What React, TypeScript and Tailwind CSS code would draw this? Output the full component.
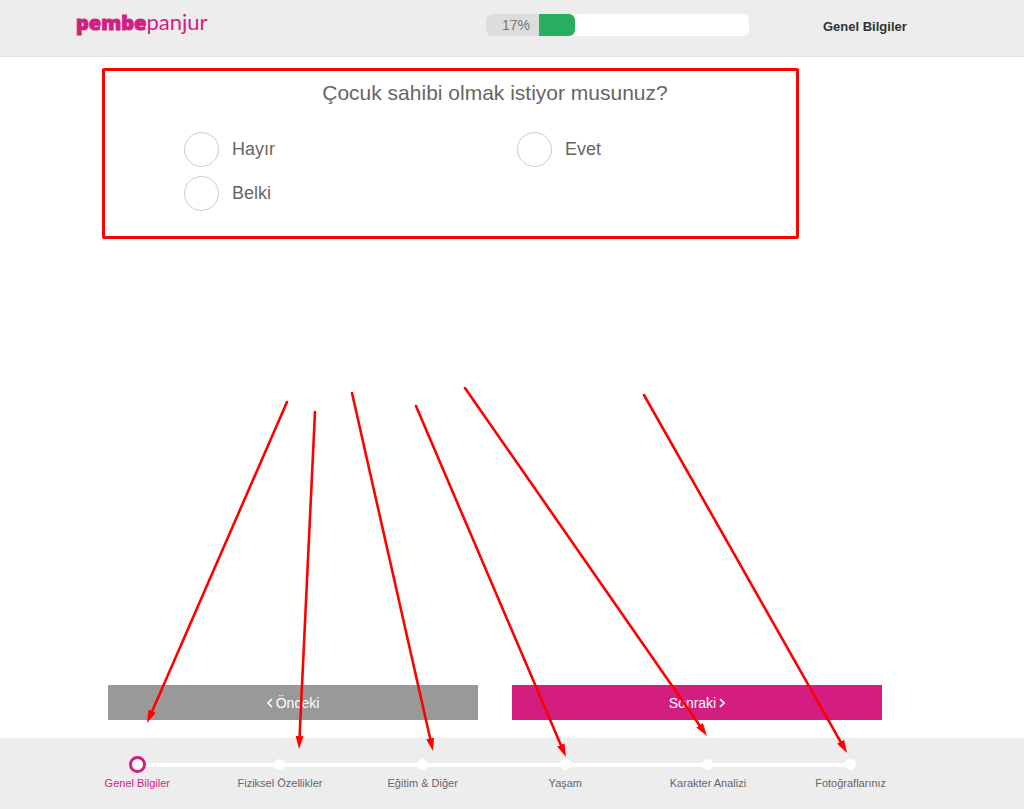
import { useState } from "react";

const options = ["Hayır", "Evet", "Belki"];

const steps = [
  "Genel Bilgiler",
  "Fiziksel Özellikler",
  "Eğitim & Diğer",
  "Yaşam",
  "Karakter Analizi",
  "Fotoğraflarınız",
];

const arrows = [
  [287, 402, 147, 723],
  [315, 412, 299, 749],
  [352, 393, 433, 751],
  [416, 406, 566, 757],
  [465, 388, 707, 736],
  [644, 395, 847, 753],
];

function Logo() {
  return (
    <a
      href="#"
      aria-label="pembepanjur"
      className="flex items-baseline text-[22px] leading-6 text-[#d31d81]"
    >
      <span className="text-xl leading-6 font-extrabold [-webkit-text-stroke:1px_#d31d81] [font-family:'Open_Sans',sans-serif]">
        pembe
      </span>
      <span className="[font-family:Lato,sans-serif]">panjur</span>
    </a>
  );
}

function Header() {
  return (
    <header className="flex h-[57px] items-start border-b border-[#e2e2e2] bg-[#ededed] pl-[76px]">
      <div className="w-[410px] shrink-0 pt-[10px]">
        <Logo />
      </div>
      <div
        role="progressbar"
        aria-valuenow={17}
        aria-valuemin={0}
        aria-valuemax={100}
        aria-label="İlerleme"
        className="mt-[14px] flex h-[22px] w-[263px] shrink-0 overflow-hidden rounded-md bg-white"
      >
        <span className="w-[53px] bg-[#ddd] pl-4 text-sm leading-[22px] text-[#777]">17%</span>
        <span className="w-9 rounded-r-md bg-[#27ae60]" />
      </div>
      <h2 className="ml-[74px] mt-[17px] whitespace-nowrap text-[13px] font-bold leading-5 text-[#333]">
        Genel Bilgiler
      </h2>
    </header>
  );
}

function Question() {
  const [answer, setAnswer] = useState("");
  return (
    <section className="relative pl-[108px] pr-[142px] pt-[21px]">
      <div
        aria-hidden="true"
        className="pointer-events-none absolute left-[102px] right-[225px] top-[11px] h-[171px] rounded-xs border-3 border-[#f00]"
      />
      <h1 id="question" className="text-center text-[21px] leading-[30px] text-[#666]">
        Çocuk sahibi olmak istiyor musunuz?
      </h1>
      <div
        role="radiogroup"
        aria-labelledby="question"
        className="mt-6 grid grid-cols-2 gap-y-[9px] pl-[76px] pr-8"
      >
        {options.map((option) => (
          <label key={option} className="flex items-center gap-[13px] text-lg text-[#666]">
            <input
              type="radio"
              name="children"
              value={option}
              checked={answer === option}
              onChange={() => setAnswer(option)}
              className="size-[35px] appearance-none rounded-full border border-[#ccc] bg-white checked:border-8 checked:border-[#d31d81]"
            />
            <span className="leading-[35px]">{option}</span>
          </label>
        ))}
      </div>
    </section>
  );
}

function Chevron({ d }: { d: string }) {
  return (
    <svg width="6" height="10" viewBox="0 0 6 10" fill="none" stroke="currentColor" strokeWidth="1.6" aria-hidden="true">
      <path d={d} />
    </svg>
  );
}

function Footer() {
  return (
    <footer className="h-[71px] bg-[#ededed] pl-[66px] pr-[102px] pt-[18px]">
      <ol className="grid grid-cols-6">
        {steps.map((step, index) => (
          <li
            key={step}
            className="relative flex flex-col items-center before:absolute before:left-1/2 before:top-[7px] before:h-1 before:w-full before:bg-white last:before:hidden"
          >
            <span className="relative flex h-[17px] items-center">
              <span
                className={
                  index === 0
                    ? "size-[17px] rounded-full border-3 border-[#d31d81] bg-white"
                    : "size-[11px] rounded-full bg-white"
                }
              />
            </span>
            <a
              href="#"
              aria-current={index === 0 ? "step" : undefined}
              className={
                index === 0
                  ? "mt-[2px] whitespace-nowrap text-[11px] leading-4 text-[#d31d81]"
                  : "mt-[2px] whitespace-nowrap text-[11px] leading-4 text-[#666]"
              }
            >
              {step}
            </a>
          </li>
        ))}
      </ol>
    </footer>
  );
}

function Arrows() {
  return (
    <svg
      aria-hidden="true"
      width="1024"
      height="809"
      viewBox="0 0 1024 809"
      className="pointer-events-none absolute bottom-0 left-0"
    >
      <defs>
        <marker
          id="head"
          markerUnits="userSpaceOnUse"
          markerWidth="13"
          markerHeight="8"
          refX="13"
          refY="4"
          orient="auto"
        >
          <path d="M0 0 L13 4 L0 8 Z" fill="#f00" />
        </marker>
      </defs>
      {arrows.map(([x1, y1, x2, y2]) => {
        const length = Math.hypot(x2 - x1, y2 - y1);
        const shaft = (length - 8) / length;
        return (
          <g key={x1} stroke="#f00" strokeWidth="2.6" strokeLinecap="round">
            <line x1={x1} y1={y1} x2={x1 + (x2 - x1) * shaft} y2={y1 + (y2 - y1) * shaft} />
            <line x1={x1} y1={y1} x2={x2} y2={y2} stroke="none" markerEnd="url(#head)" />
          </g>
        );
      })}
    </svg>
  );
}

export default function App() {
  return (
    <div className="relative flex min-h-screen flex-col overflow-hidden bg-white [font-family:'Liberation_Sans',Arial,sans-serif]">
      <Header />
      <main className="flex flex-1 flex-col justify-between">
        <Question />
        <div className="mb-[18px] grid grid-cols-2 gap-[34px] pl-[108px] pr-[142px]">
          <button type="button" className="flex h-[35px] items-center justify-center gap-[3px] bg-[#999] text-sm text-white">
            <Chevron d="M5 1 L1 5 L5 9" />
            Önceki
          </button>
          <button type="button" className="flex h-[35px] items-center justify-center gap-[3px] bg-[#d31d81] text-sm text-white">
            Sonraki
            <Chevron d="M1 1 L5 5 L1 9" />
          </button>
        </div>
      </main>
      <Footer />
      <Arrows />
    </div>
  );
}
